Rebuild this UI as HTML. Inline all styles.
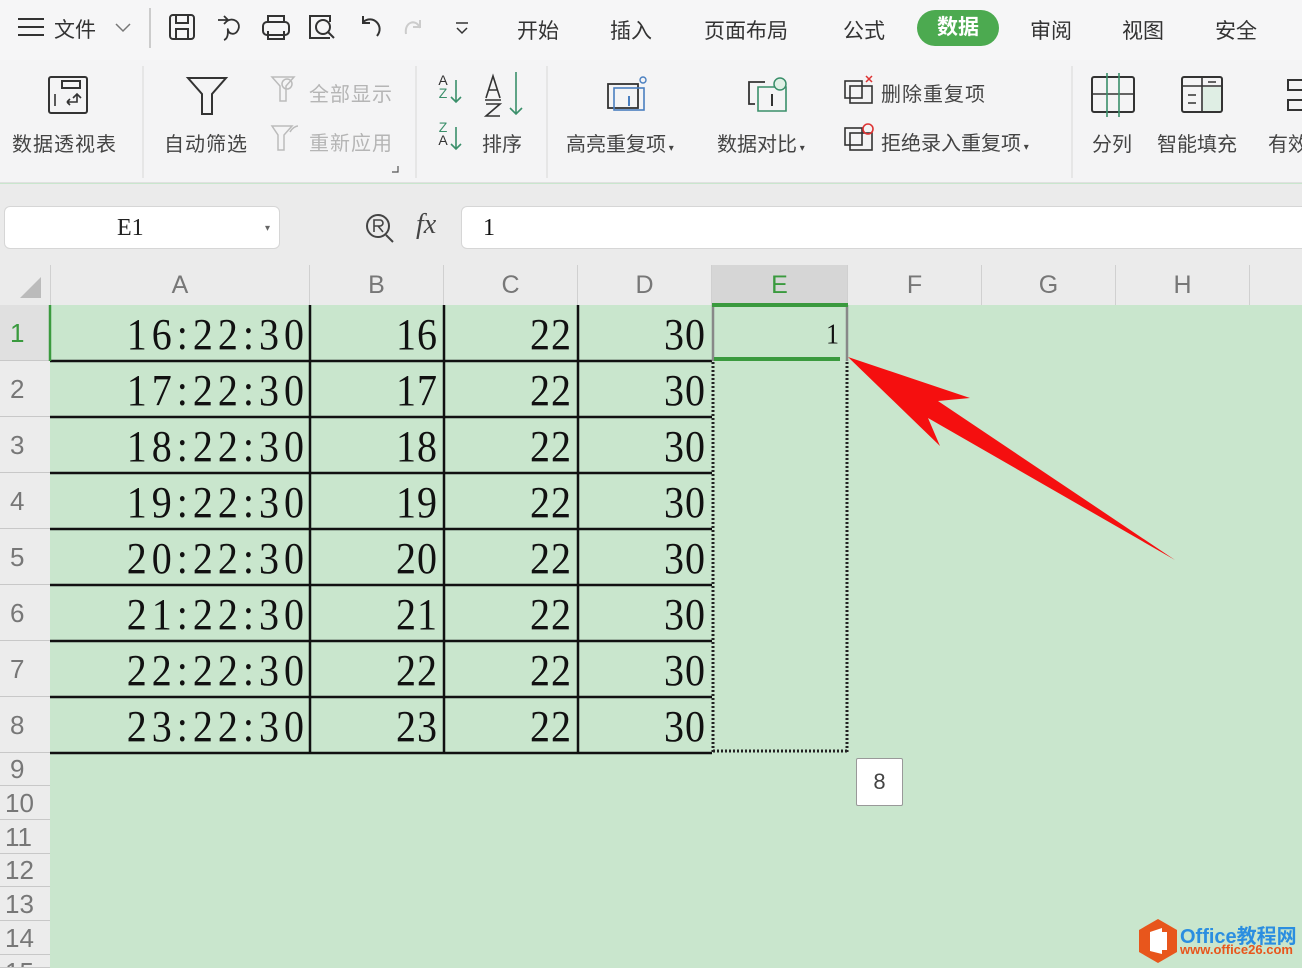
<!DOCTYPE html>
<html><head><meta charset="utf-8">
<style>
*{margin:0;padding:0;box-sizing:border-box}
html,body{width:1302px;height:968px;overflow:hidden}
body{position:relative;background:#c9e6cd;font-family:"Liberation Sans","Noto Sans CJK SC",sans-serif}
.a{position:absolute;white-space:nowrap}
.t{font-size:21px;color:#333}
.r{font-size:20px;color:#444}
.g{color:#b5b5b5}
.num{font-family:"Liberation Serif","Noto Serif CJK SC",serif;font-size:40px;color:#111;text-align:right;letter-spacing:1px;transform:scaleY(1.1);transform-origin:50% 60%}
.tm{letter-spacing:5px;margin-right:-5px}
.rh{position:absolute;left:0;width:50px;background:#ececec;border-bottom:1px solid #c8c8c8;color:#777;font-size:26px;text-align:left;padding-left:10px}
.ch{position:absolute;top:265px;height:40px;color:#777;font-size:25px;text-align:center;line-height:40px;border-right:1px solid #d0d0d0}
</style></head><body>
<div class="a" style="left:0;top:0;width:1302px;height:60px;background:#f6f6f7"></div>
<div class="a" style="left:0;top:60px;width:1302px;height:123px;background:#f4f4f5;border-bottom:1px solid #e0e0e0"></div>
<div class="a" style="left:0;top:184px;width:1302px;height:121px;background:#ebebeb"></div>
<svg class="a" style="left:0;top:0" width="1302" height="184" fill="none" stroke="#333" stroke-width="2">
<path d="M18 19h26M18 27h26M18 35h26"/>
<path d="M116 24l7 7 7-7" stroke="#777" stroke-width="1.5"/>
<path d="M150 8v40" stroke="#ccc"/>
<rect x="170" y="15" width="24" height="24" rx="3"/><path d="M176 15v8h12v-8M176 39v-10h12v10"/>
<path d="M218 20h10M224 16l4 4-4 4M226 22c6-6 16 0 12 8-3 6-9 4-10 0-1-4 2 8 -4 10" stroke-width="1.8"/>
<rect x="263" y="22" width="26" height="13" rx="4"/><path d="M268 22v-6h16v6M268 31v8h16v-8"/>
<path d="M330 38h-20v-22h20v6"/><circle cx="323" cy="27" r="7"/><path d="M328 32l6 6"/>
<path d="M363 22c10-8 22 4 14 14" /><path d="M363 16v7h7"/>
<path d="M420 28c-4-10-16-6-14 6M420 20v7h-7" stroke="#ccc"/>
<path d="M456 23h12M457 28l5 5 5-5" stroke-width="1.5"/>
<rect x="49" y="77" width="38" height="36" rx="2"/><rect x="62" y="81" width="18" height="7"/><path d="M55 94v12M67 102h10v-8M73 98l4-4 4 4M67 102l3-3M67 102l3 3" stroke-width="1.6"/>
<path d="M188 78h38l-14 16v20h-10v-20z"/>
<path d="M272 77h22l-8 9v15h-6v-15z" stroke="#bbb" stroke-width="1.5"/><circle cx="287" cy="84" r="5" stroke="#bbb" stroke-width="1.5"/>
<path d="M272 126h20l-8 9v15h-6v-15z" stroke="#bbb" stroke-width="1.5"/><path d="M290 132c2-4 6-6 8-6" stroke="#bbb" stroke-width="1.5"/>
<path d="M398 166v6h-6" stroke="#555" stroke-width="1.2"/>
<path d="M416 66v112M547 66v112M1072 66v112M143 66v112" stroke="#e2e2e2" stroke-width="1.5"/>
<path d="M456 80v22M451 97l5 5 5-5M456 127v22M451 144l5 5 5-5" stroke="#3a8f6a" stroke-width="1.6"/>
<path d="M516 72v42M510 108l6 6 6-6" stroke="#3a8f6a" stroke-width="1.6"/>
<path d="M486 98l7-22 7 22M489 90h8M485 100h16M486 104h14l-14 12h14" stroke-width="1.6"/>
<rect x="608" y="84" width="30" height="24" stroke-width="1.8"/><rect x="614" y="88" width="30" height="22" stroke="#4a7fc0" stroke-width="1.6"/><circle cx="643" cy="80" r="3" stroke="#4a7fc0" stroke-width="1.4"/><path d="M629 96v10" stroke="#4a7fc0"/>
<path d="M765 82h-16v22h6" stroke-width="1.8"/><path d="M758 87h28v24h-28z" stroke="#3a8f6a" stroke-width="1.6"/><circle cx="780" cy="84" r="6" stroke="#3a8f6a" stroke-width="1.5" fill="#dff0e5"/><path d="M772 94v12"/>
<rect x="845" y="81" width="17" height="17" stroke-width="1.6"/><rect x="850" y="86" width="22" height="17" stroke-width="1.6"/><path d="M866 76l6 6M872 76l-6 6" stroke="#d33" stroke-width="1.5"/>
<rect x="845" y="128" width="17" height="17" stroke-width="1.6"/><rect x="850" y="133" width="22" height="17" stroke-width="1.6"/><circle cx="868" cy="129" r="5" stroke="#d33" stroke-width="1.6"/>
<rect x="1092" y="77" width="42" height="35" rx="2"/><path d="M1092 94h42" stroke-width="1.6"/><path d="M1107 73v44M1119 73v44" stroke="#3a8f6a" stroke-width="1.6"/>
<rect x="1203" y="87" width="18" height="24" fill="#dfeee4" stroke="none"/><rect x="1182" y="77" width="40" height="35" rx="2"/><path d="M1182 86h40M1202 77v35M1188 95h8M1188 103h8M1208 82h8" stroke-width="1.6"/>
<path d="M1302 80h-14v10h14M1302 100h-14v10h14" />
</svg>
<div class="a" style="left:437px;top:74px;font-size:14px;line-height:13px;color:#333;text-align:center;width:12px">A<br><span style="color:#3a8f6a">Z</span></div>
<div class="a" style="left:437px;top:121px;font-size:14px;line-height:13px;color:#3a8f6a;text-align:center;width:12px">Z<br><span style="color:#333">A</span></div>
<div class="a t" style="left:54px;top:14px">文件</div>
<div class="a t" style="left:517px;top:15px">开始</div>
<div class="a t" style="left:610px;top:15px">插入</div>
<div class="a t" style="left:704px;top:15px">页面布局</div>
<div class="a t" style="left:843px;top:15px">公式</div>
<div class="a" style="left:917px;top:10px;width:82px;height:36px;border-radius:18px;background:#4caa50;color:#fff;font-size:21px;text-align:center;line-height:36px;font-weight:bold">数据</div>
<div class="a t" style="left:1030px;top:15px">审阅</div>
<div class="a t" style="left:1122px;top:15px">视图</div>
<div class="a t" style="left:1215px;top:15px">安全</div>

<div class="a r" style="left:12px;top:128px;letter-spacing:1px">数据透视表</div>
<div class="a r" style="left:164px;top:128px;letter-spacing:1px">自动筛选</div>
<div class="a r g" style="left:309px;top:78px;letter-spacing:1px">全部显示</div>
<div class="a r g" style="left:309px;top:127px;letter-spacing:1px">重新应用</div>
<div class="a r" style="left:482px;top:128px">排序</div>
<div class="a r" style="left:566px;top:128px">高亮重复项<span style="font-size:10px"> ▾</span></div>
<div class="a r" style="left:717px;top:128px">数据对比<span style="font-size:10px"> ▾</span></div>
<div class="a r" style="left:881px;top:78px;letter-spacing:1px">删除重复项</div>
<div class="a r" style="left:881px;top:127px">拒绝录入重复项<span style="font-size:10px"> ▾</span></div>
<div class="a r" style="left:1092px;top:128px">分列</div>
<div class="a r" style="left:1157px;top:128px">智能填充</div>
<div class="a r" style="left:1268px;top:128px">有效</div>

<div class="a" style="left:4px;top:206px;width:276px;height:43px;background:#fff;border:1px solid #d6d6d6;border-radius:6px;font-family:'Liberation Serif',serif;font-size:24px;line-height:43px;padding-left:112px;color:#222">E1<span style="position:absolute;left:260px;font-size:10px;color:#666">▾</span></div>
<svg class="a" style="left:362px;top:210px" width="40" height="36" fill="none" stroke="#444" stroke-width="2"><circle cx="16" cy="16" r="11"/><path d="M24 25l7 7"/><path d="M12 22v-12h6a3 3 0 0 1 0 6h-6M16 16l5 6" stroke-width="1.6"/></svg>
<div class="a" style="left:416px;top:209px;font-family:'Liberation Serif',serif;font-style:italic;font-size:28px;color:#444">fx</div>
<div class="a" style="left:461px;top:206px;width:850px;height:43px;background:#fff;border:1px solid #d6d6d6;border-radius:6px;font-family:'Liberation Serif',serif;font-size:24px;line-height:43px;padding-left:21px;color:#111">1</div>

<svg class="a" style="left:20px;top:277px" width="22" height="22"><path d="M21 0v21h-21z" fill="#bbb"/></svg>
<div class="ch" style="left:50px;width:260px;border-left:1px solid #d0d0d0">A</div>
<div class="ch" style="left:310px;width:134px">B</div>
<div class="ch" style="left:444px;width:134px">C</div>
<div class="ch" style="left:578px;width:134px">D</div>
<div class="ch" style="left:712px;width:136px;background:#d6d6d6;color:#3a9a3e">E</div>
<div class="ch" style="left:848px;width:134px">F</div>
<div class="ch" style="left:982px;width:134px">G</div>
<div class="ch" style="left:1116px;width:134px">H</div>

<div class="rh" style="top:305px;height:56px;line-height:56px;color:#3a9a3e;background:#e0e0e0">1</div>
<div class="rh" style="top:361px;height:56px;line-height:56px">2</div>
<div class="rh" style="top:417px;height:56px;line-height:56px">3</div>
<div class="rh" style="top:473px;height:56px;line-height:56px">4</div>
<div class="rh" style="top:529px;height:56px;line-height:56px">5</div>
<div class="rh" style="top:585px;height:56px;line-height:56px">6</div>
<div class="rh" style="top:641px;height:56px;line-height:56px">7</div>
<div class="rh" style="top:697px;height:56px;line-height:56px">8</div>
<div class="rh" style="top:753px;height:33px;line-height:33px">9</div>
<div class="rh" style="top:786px;height:34px;line-height:34px;padding-left:5px">10</div>
<div class="rh" style="top:820px;height:34px;line-height:34px;padding-left:5px">11</div>
<div class="rh" style="top:854px;height:33px;line-height:33px;padding-left:5px">12</div>
<div class="rh" style="top:887px;height:34px;line-height:34px;padding-left:5px">13</div>
<div class="rh" style="top:921px;height:34px;line-height:34px;padding-left:5px">14</div>
<div class="rh" style="top:955px;height:13px;line-height:34px;padding-left:5px;overflow:hidden">15</div>

<svg class="a" style="left:0;top:0" width="1302" height="968">
<g stroke="#111" stroke-width="2.5">
<path d="M50 361h662M50 417h662M50 473h662M50 529h662M50 585h662M50 641h662M50 697h662M50 753h662"/>
<path d="M310 305v448M444 305v448M578 305v448"/>
</g>
<path d="M50 305v56" stroke="#3a9a3e" stroke-width="2.5"/>
<path d="M713 362v390M847 362v390M713 751h134" stroke="#222" stroke-width="3" stroke-dasharray="2 2"/>
<path d="M713 305v56M847 305v56" stroke="#888" stroke-width="2.5"/>
<path d="M712 305h136" stroke="#3a9a3e" stroke-width="4"/>
<path d="M714 359h126" stroke="#3a9a3e" stroke-width="4"/>
<polygon points="848,357 970,398 938,401 1175,560 928,418 940,446" fill="#f50f0f"/>
</svg>

<div class="a num" style="left:60px;top:311px;width:244px"><span class="tm">16:22:30</span></div>
<div class="a num" style="left:60px;top:367px;width:244px"><span class="tm">17:22:30</span></div>
<div class="a num" style="left:60px;top:423px;width:244px"><span class="tm">18:22:30</span></div>
<div class="a num" style="left:60px;top:479px;width:244px"><span class="tm">19:22:30</span></div>
<div class="a num" style="left:60px;top:535px;width:244px"><span class="tm">20:22:30</span></div>
<div class="a num" style="left:60px;top:591px;width:244px"><span class="tm">21:22:30</span></div>
<div class="a num" style="left:60px;top:647px;width:244px"><span class="tm">22:22:30</span></div>
<div class="a num" style="left:60px;top:703px;width:244px"><span class="tm">23:22:30</span></div>
<div class="a num" style="left:320px;top:311px;width:118px">16</div>
<div class="a num" style="left:320px;top:367px;width:118px">17</div>
<div class="a num" style="left:320px;top:423px;width:118px">18</div>
<div class="a num" style="left:320px;top:479px;width:118px">19</div>
<div class="a num" style="left:320px;top:535px;width:118px">20</div>
<div class="a num" style="left:320px;top:591px;width:118px">21</div>
<div class="a num" style="left:320px;top:647px;width:118px">22</div>
<div class="a num" style="left:320px;top:703px;width:118px">23</div>
<div class="a num" style="left:454px;top:311px;width:118px">22</div>
<div class="a num" style="left:454px;top:367px;width:118px">22</div>
<div class="a num" style="left:454px;top:423px;width:118px">22</div>
<div class="a num" style="left:454px;top:479px;width:118px">22</div>
<div class="a num" style="left:454px;top:535px;width:118px">22</div>
<div class="a num" style="left:454px;top:591px;width:118px">22</div>
<div class="a num" style="left:454px;top:647px;width:118px">22</div>
<div class="a num" style="left:454px;top:703px;width:118px">22</div>
<div class="a num" style="left:588px;top:311px;width:118px">30</div>
<div class="a num" style="left:588px;top:367px;width:118px">30</div>
<div class="a num" style="left:588px;top:423px;width:118px">30</div>
<div class="a num" style="left:588px;top:479px;width:118px">30</div>
<div class="a num" style="left:588px;top:535px;width:118px">30</div>
<div class="a num" style="left:588px;top:591px;width:118px">30</div>
<div class="a num" style="left:588px;top:647px;width:118px">30</div>
<div class="a num" style="left:588px;top:703px;width:118px">30</div>
<div class="a num" style="left:720px;top:320px;width:120px;font-size:26px">1</div>

<div class="a" style="left:856px;top:758px;width:47px;height:48px;background:#fff;border:1px solid #999;border-radius:2px;font-size:22px;color:#444;text-align:center;line-height:46px">8</div>

<svg class="a" style="left:1138px;top:918px" width="40" height="46"><polygon points="20,1 39,12 39,34 20,45 1,34 1,12" fill="#e8561c"/><path d="M12 14l12-4v26l-12-3z M24 14h5v18h-5" fill="#fff"/></svg>
<div class="a" style="left:1180px;top:920px;font-size:20px;font-weight:bold;color:#2b8ee0">Office教程网</div>
<div class="a" style="left:1180px;top:942px;font-size:13px;font-weight:bold;color:#e8561c">www.office26.com</div>
</body></html>
